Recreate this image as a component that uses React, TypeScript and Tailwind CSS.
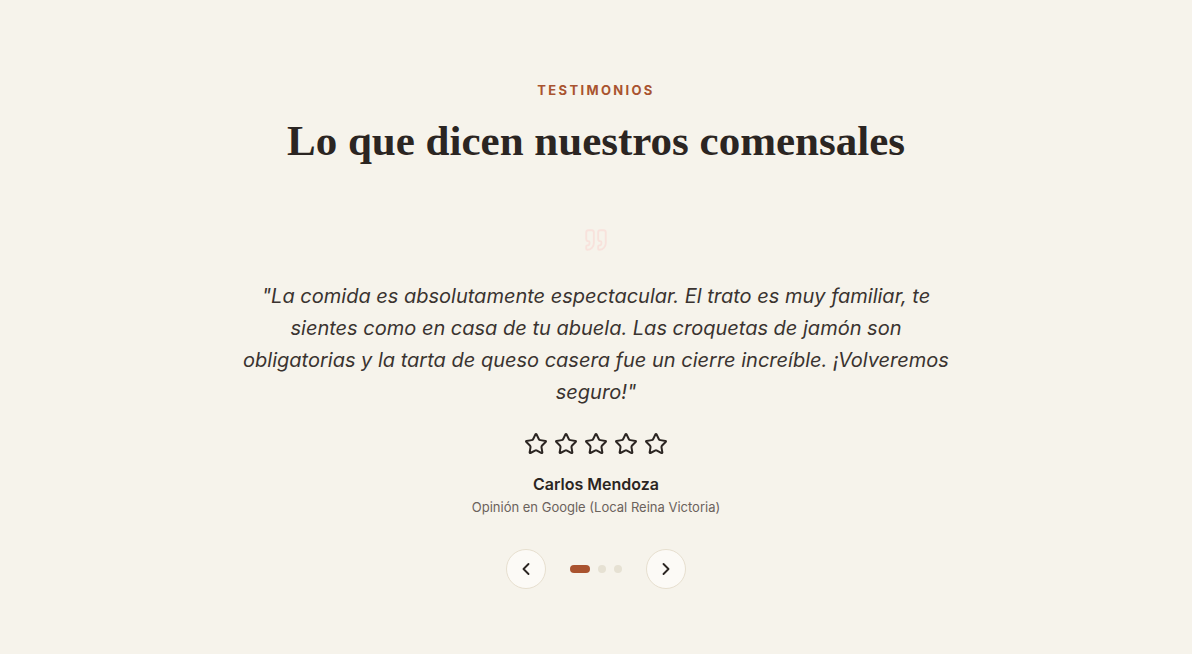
import React, { useState } from 'react';
import { Quote, Star, ChevronLeft, ChevronRight } from 'lucide-react';

const reviews = [
  {
    text: '"La comida es absolutamente espectacular. El trato es muy familiar, te sientes como en casa de tu abuela. Las croquetas de jamón son obligatorias y la tarta de queso casera fue un cierre increíble. ¡Volveremos seguro!"',
    author: 'Carlos Mendoza',
    source: 'Opinión en Google (Local Reina Victoria)',
  },
  {
    text: '"Un rincón con alma. Producto de mercado, raciones generosas y un servicio atento de principio a fin."',
    author: 'Lucía Herrera',
    source: 'Opinión en TripAdvisor',
  },
  {
    text: '"El cocido de los jueves merece la visita. Ambiente cálido y precios justos."',
    author: 'Andrés Ruiz',
    source: 'Opinión en Google (Local Centro)',
  },
];

export default function App() {
  const [index, setIndex] = useState(0);
  const review = reviews[index];

  const prev = () => setIndex((i) => (i - 1 + reviews.length) % reviews.length);
  const next = () => setIndex((i) => (i + 1) % reviews.length);

  return (
    <section className="min-h-[654px] w-full bg-[#f6f3eb] font-['Inter',sans-serif] text-[#2b2522]">
      <div className="mx-auto flex max-w-[760px] flex-col items-center pt-[81px] text-center">
        <span className="text-[13px] font-bold uppercase leading-[18px] tracking-[0.18em] text-[#a9532f]">
          Testimonios
        </span>
        <h2 className="mt-[16px] font-['Liberation_Serif',serif] text-[43px] font-bold leading-[52px] text-[#2b2522]">
          Lo que dicen nuestros comensales
        </h2>

        {/* faint quote mark above the review */}
        <Quote className="mt-[60px] h-[26px] w-[26px] text-[#f8e2dc]" strokeWidth={1.75} />

        <p className="mt-[27px] max-w-[710px] text-[20px] italic leading-[32px] text-[#3a3330]">
          {review.text}
        </p>

        <div className="mt-[24px] flex gap-[6px]">
          {[0, 1, 2, 3, 4].map((s) => (
            <Star key={s} className="h-[24px] w-[24px] text-[#2b2522]" strokeWidth={2} />
          ))}
        </div>

        <p className="mt-[16px] text-[16px] font-semibold leading-[24px] text-[#2b2522]">{review.author}</p>
        <p className="mt-[1px] text-[13px] leading-[20px] text-[#6b625c]">{review.source}</p>

        <div className="mt-[32px] flex items-center gap-6">
          <button
            onClick={prev}
            className="flex h-[40px] w-[40px] items-center justify-center rounded-full border border-[#e7dfcf] bg-[#fcfaf6] text-[#2b2522]"
          >
            <ChevronLeft className="h-[20px] w-[20px]" strokeWidth={2.25} />
          </button>
          <div className="flex items-center gap-[8px]">
            {reviews.map((_, i) =>
              i === index ? (
                <span key={i} className="h-[8px] w-[20px] rounded-full bg-[#a9532f]" />
              ) : (
                <span key={i} className="h-[8px] w-[8px] rounded-full bg-[#e6e1d3]" />
              )
            )}
          </div>
          <button
            onClick={next}
            className="flex h-[40px] w-[40px] items-center justify-center rounded-full border border-[#e7dfcf] bg-[#fcfaf6] text-[#2b2522]"
          >
            <ChevronRight className="h-[20px] w-[20px]" strokeWidth={2.25} />
          </button>
        </div>
      </div>
    </section>
  );
}
